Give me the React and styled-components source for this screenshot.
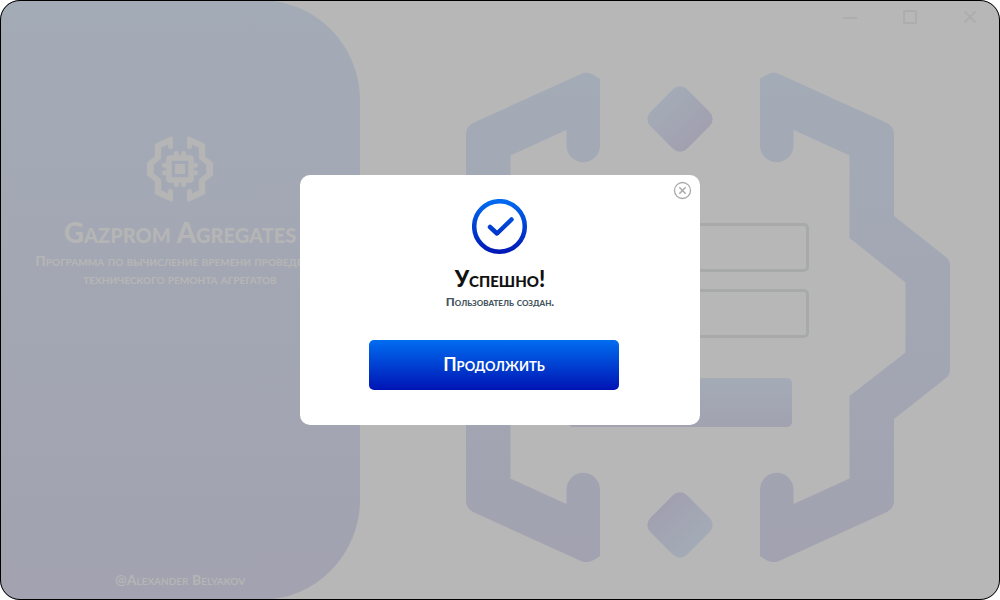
import React from "react";
import styled, { createGlobalStyle } from "styled-components";

const GlobalStyle = createGlobalStyle`
  * { box-sizing: border-box; }
  body {
    margin: 0;
    background: #fff;
    font-family: Lato, "Open Sans", sans-serif;
    font-variant-caps: small-caps;
    font-weight: 900;
  }
  button, input { font: inherit; }
  h1, h2, p { margin: 0; font-weight: inherit; }
`;

const mutedGradient = "linear-gradient(#a3abb6, #a2a2b0)";

const Window = styled.div`
  position: relative;
  display: flex;
  min-height: 100vh;
  border-radius: 20px;
  overflow: hidden;
  background: #b7b7b7;
  outline: 1px solid #000;
  outline-offset: -1px;
`;

const Sidebar = styled.aside`
  flex: 0 0 360px;
  display: flex;
  flex-direction: column;
  align-items: center;
  justify-content: space-between;
  padding: 136px 20px 10px;
  border-radius: 0 100px 100px 0;
  background: ${mutedGradient};
  color: #b5b5b5;
  text-align: center;
`;

const Brand = styled.div`
  display: flex;
  flex-direction: column;
  align-items: center;
`;

const AppName = styled.h1`
  margin-top: 12px;
  font-size: 28px;
  line-height: 36px;
  white-space: nowrap;
`;

const Tagline = styled.p`
  margin-top: 2px;
  font-size: 14px;
  line-height: 18px;
  white-space: nowrap;
`;

const Author = styled.footer`
  font-size: 14px;
  line-height: 20px;
  font-weight: 700;
`;

const Main = styled.main`
  flex: 1;
  display: grid;
  grid-template-rows: 34px 1fr;
`;

const TitleBar = styled.div`
  display: flex;
  justify-content: flex-end;
`;

const WindowButton = styled.button`
  width: 60px;
  height: 34px;
  padding: 0;
  border: 0;
  background: none;
  color: #adadad;
  svg { display: block; margin: 0 auto; }
`;

const Stage = styled.section`
  display: grid;
  justify-items: center;
  align-items: start;
  > * { grid-area: 1 / 1; }
`;

const Gear = styled.svg`
  width: 540px;
  height: 490px;
  margin-top: 38px;
`;

const LoginForm = styled.form`
  display: flex;
  flex-direction: column;
  align-items: center;
  gap: 17px;
  width: 258px;
  margin-top: 189px;
`;

const Field = styled.input`
  width: 100%;
  height: 49px;
  border: 3px solid #a8aaaa;
  border-radius: 5px;
  background: #b7b7b7;
`;

const SubmitButton = styled.button`
  width: 224px;
  height: 49px;
  margin-top: 23px;
  border: 0;
  border-radius: 5px;
  background: ${mutedGradient};
`;

const Overlay = styled.div`
  position: absolute;
  inset: 0;
  display: flex;
  align-items: center;
  justify-content: center;
`;

const Dialog = styled.div`
  position: relative;
  display: flex;
  flex-direction: column;
  align-items: center;
  width: 400px;
  padding: 24px 20px 35px;
  border-radius: 10px;
  background: #fff;
`;

const CloseButton = styled.button`
  position: absolute;
  top: 6px;
  right: 8px;
  padding: 0;
  border: 0;
  background: none;
  color: #aaa;
  svg { display: block; }
`;

const DialogTitle = styled.h2`
  margin-top: 10px;
  color: #111;
  font-size: 22px;
  line-height: 28px;
`;

const DialogText = styled.p`
  color: #455560;
  font-size: 12px;
  line-height: 18px;
`;

const ContinueButton = styled.button`
  width: 250px;
  height: 50px;
  margin: 29px 12px 0 0;
  padding: 0 0 2px;
  border: 0;
  border-radius: 5px;
  background: linear-gradient(#006df0, #0014b4);
  color: #fff;
  font-size: 18px;
  font-weight: 700;
`;

const gearHalf =
  "M760 79 Q772 70 779 74 L887 123 Q894 127 894 134 V216 L946 257 Q950 260 950 266 V369 Q950 375 946 378 L894 419 V501 Q894 508 887 512 L779 561 Q772 565 760 556 V489.500 A16.700 16.700 0 0 1 793.500 489.500 V504 L849.500 478.500 V396 L905.500 352.500 V282.500 L849.500 238 V155.500 L793.500 130 V145.500 A16.700 16.700 0 0 1 760 145.500 Z";

function GearDrawing() {
  return (
    <Gear viewBox="410 72 540 490" aria-hidden="true">
      <defs>
        <linearGradient id="gear" gradientUnits="userSpaceOnUse" x1="0" y1="72" x2="0" y2="562">
          <stop stopColor="#a3abb6" />
          <stop offset="1" stopColor="#a2a2b0" />
        </linearGradient>
        <linearGradient id="diamondTop">
          <stop stopColor="#a3abb6" />
          <stop offset="1" stopColor="#a2a0b0" />
        </linearGradient>
        <linearGradient id="diamondBottom">
          <stop stopColor="#a2a0b0" />
          <stop offset="1" stopColor="#a3abb6" />
        </linearGradient>
      </defs>
      <path d={gearHalf} fill="url(#gear)" />
      <path d={gearHalf} fill="url(#gear)" transform="translate(1360 0) scale(-1 1)" />
      <rect x="654" y="93" width="52" height="52" rx="10" fill="url(#diamondTop)" transform="rotate(45 680 119)" />
      <rect x="654" y="499" width="52" height="52" rx="10" fill="url(#diamondBottom)" transform="rotate(45 680 525)" />
    </Gear>
  );
}

const logoHalf =
  "M40 2 Q40 0 42 .5 L57 7.300 Q58.200 8 58.200 9 V20.500 L65.200 26 Q66 26.700 66 28 V38 Q66 39.300 65.200 40 L58.200 45.500 V57 Q58.200 58 57 58.700 L42 65.500 Q40 66 40 64 V55.500 A2.500 2.500 0 0 1 45 55.500 V57.500 L51.800 54.300 V43.500 L59.200 37.300 V28.700 L51.800 22.500 V11.700 L45 8.500 V10.500 A2.500 2.500 0 0 1 40 10.500 Z";

function Logo() {
  return (
    <svg width="66" height="66" viewBox="0 0 66 66" aria-hidden="true">
      <path d={logoHalf} fill="currentColor" />
      <path d={logoHalf} fill="currentColor" transform="translate(66 0) scale(-1 1)" />
      <path
        d="M29.300 17.500V22M36.700 17.500V22M29.300 44V48.500M36.700 44V48.500M17.500 29.300H22M17.500 36.700H22M44 29.300H48.500M44 36.700H48.500"
        stroke="currentColor"
        strokeWidth="5"
        strokeLinecap="round"
      />
      <rect x="22" y="22" width="22" height="22" rx="1" fill="none" stroke="currentColor" strokeWidth="5.500" />
      <rect x="28" y="28" width="10" height="10" fill="currentColor" />
    </svg>
  );
}

function SuccessIcon() {
  return (
    <svg width="56" height="56" viewBox="0 0 56 56" fill="none" aria-hidden="true">
      <defs>
        <linearGradient id="success" gradientUnits="userSpaceOnUse" x1="0" y1="0" x2="0" y2="56">
          <stop stopColor="#006df0" />
          <stop offset="1" stopColor="#0014b4" />
        </linearGradient>
      </defs>
      <circle cx="27.500" cy="27.500" r="25.300" stroke="url(#success)" strokeWidth="4.500" />
      <path d="M18 28L25 34.500L39.500 20.500" stroke="url(#success)" strokeWidth="4.500" strokeLinecap="round" strokeLinejoin="round" />
    </svg>
  );
}

export default function App() {
  return (
    <Window>
      <GlobalStyle />
      <Sidebar>
        <Brand>
          <Logo />
          <AppName>Gazprom Agregates</AppName>
          <Tagline>
            Программа по вычисление времени проведения
            <br />
            технического ремонта агрегатов
          </Tagline>
        </Brand>
        <Author>@Alexander Belyakov</Author>
      </Sidebar>
      <Main>
        <TitleBar>
          <WindowButton aria-label="Свернуть">
            <svg width="14" height="14" viewBox="0 0 14 14"><path d="M0 8H14" stroke="currentColor" strokeWidth="2" /></svg>
          </WindowButton>
          <WindowButton aria-label="Развернуть">
            <svg width="14" height="14" viewBox="0 0 14 14"><rect x="1" y="1" width="12" height="12" rx=".5" fill="none" stroke="currentColor" strokeWidth="2" /></svg>
          </WindowButton>
          <WindowButton aria-label="Закрыть">
            <svg width="14" height="14" viewBox="0 0 14 14"><path d="M1.500 1.500L12.500 12.500M12.500 1.500L1.500 12.500" stroke="currentColor" strokeWidth="2" /></svg>
          </WindowButton>
        </TitleBar>
        <Stage>
          <GearDrawing />
          <LoginForm>
            <Field type="text" aria-label="Логин" />
            <Field type="password" aria-label="Пароль" />
            <SubmitButton type="button" aria-label="Создать" />
          </LoginForm>
        </Stage>
      </Main>
      <Overlay>
        <Dialog role="dialog" aria-labelledby="dialog-title">
          <CloseButton aria-label="Закрыть окно">
            <svg width="19" height="19" viewBox="0 0 19 19" fill="none" stroke="currentColor">
              <circle cx="9.500" cy="9.500" r="8" strokeWidth="1.300" />
              <path d="M6.300 6.300L12.700 12.700M12.700 6.300L6.300 12.700" strokeWidth="1.500" />
            </svg>
          </CloseButton>
          <SuccessIcon />
          <DialogTitle id="dialog-title">Успешно!</DialogTitle>
          <DialogText>Пользователь создан.</DialogText>
          <ContinueButton>Продолжить</ContinueButton>
        </Dialog>
      </Overlay>
    </Window>
  );
}
